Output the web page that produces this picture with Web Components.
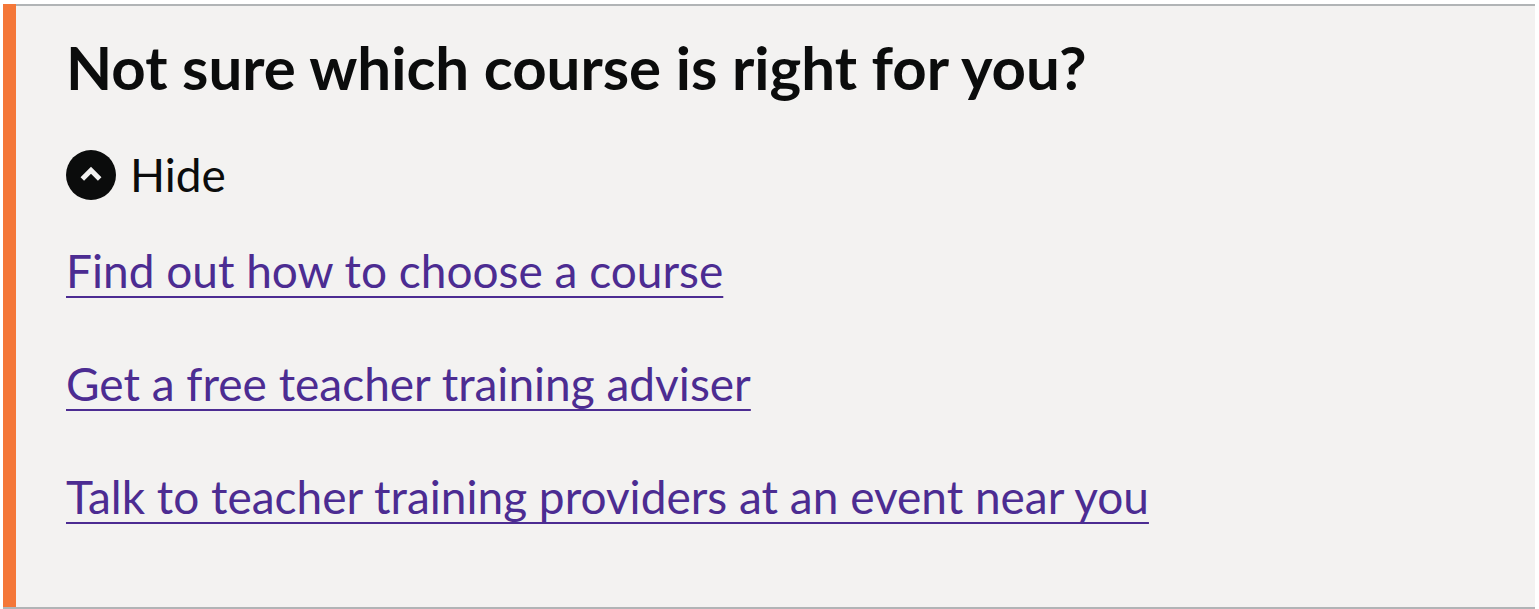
<!DOCTYPE html>
<html lang="en"><head><meta charset="utf-8"><title>Choosing a course</title>
<style>
body{margin:0;background:#fff;font-family:Lato,"Noto Sans",sans-serif}
</style></head><body>
<course-guidance>
<span slot="title">Not sure which course is right for you?</span>
<guidance-link href="#choose">Find out how to choose a course</guidance-link>
<guidance-link href="#adviser">Get a free teacher training adviser</guidance-link>
<guidance-link href="#events">Talk to teacher training providers at an event near you</guidance-link>
</course-guidance>
<script>
class GuidanceLink extends HTMLElement{
connectedCallback(){
if(this.shadowRoot)return;
this.attachShadow({mode:'open'}).innerHTML=`<style>
:host{display:block}
a{color:#4c2c92;font-size:46px;line-height:64px;text-decoration:underline;text-decoration-thickness:2px;text-underline-offset:8px}
</style><a><slot></slot></a>`;
this.shadowRoot.querySelector('a').href=this.getAttribute('href');
}}
class ToggleButton extends HTMLElement{
connectedCallback(){
if(this.shadowRoot)return;
this.attachShadow({mode:'open'}).innerHTML=`<style>
:host{display:block}
button{display:flex;align-items:center;gap:14px;padding:0;border:0;background:none;color:#0b0c0c;font:inherit;font-size:46px;line-height:60px;cursor:pointer}
svg{width:50px;height:50px}
button[aria-expanded=false] svg{transform:rotate(180deg)}
</style><button type="button" aria-expanded="true"><svg viewBox="0 0 50 50" aria-hidden="true"><circle cx="25" cy="25" r="25" fill="#0b0c0c"/><path d="M16.300 29 25 20.300 33.700 29" fill="none" stroke="#f3f2f1" stroke-width="5"/></svg><span>Hide</span></button>`;
const b=this.shadowRoot.querySelector('button');
b.onclick=()=>{const open=b.getAttribute('aria-expanded')!=='true';b.setAttribute('aria-expanded',open);b.querySelector('span').textContent=open?'Hide':'Show';this.dispatchEvent(new CustomEvent('toggle-change',{detail:open}))};
}}
class CourseGuidance extends HTMLElement{
connectedCallback(){
if(this.shadowRoot)return;
this.attachShadow({mode:'open'}).innerHTML=`<style>
:host{display:block;padding:4px 4px 0 3px}
section{border-bottom:2px solid #b1b4b6;background:#f3f2f1;display:flex}
.bar{width:13px;background:#f47738;flex:none}
.body{flex:1;border-top:2px solid #b1b4b6;padding:25px 50px 78px}
h2{margin:0;color:#0b0c0c;font-size:60px;line-height:72px;font-weight:700}
toggle-button{margin-top:42px}
.links{display:grid;gap:49px;margin-top:34px}
.links[hidden]{display:none}
</style><section><div class="bar"></div><div class="body"><h2><slot name="title"></slot></h2><toggle-button></toggle-button><div class="links"><slot></slot></div></div></section>`;
this.shadowRoot.querySelector('toggle-button').addEventListener('toggle-change',e=>{this.shadowRoot.querySelector('.links').hidden=!e.detail});
}}
customElements.define('guidance-link',GuidanceLink);
customElements.define('toggle-button',ToggleButton);
customElements.define('course-guidance',CourseGuidance);
</script></body></html>
